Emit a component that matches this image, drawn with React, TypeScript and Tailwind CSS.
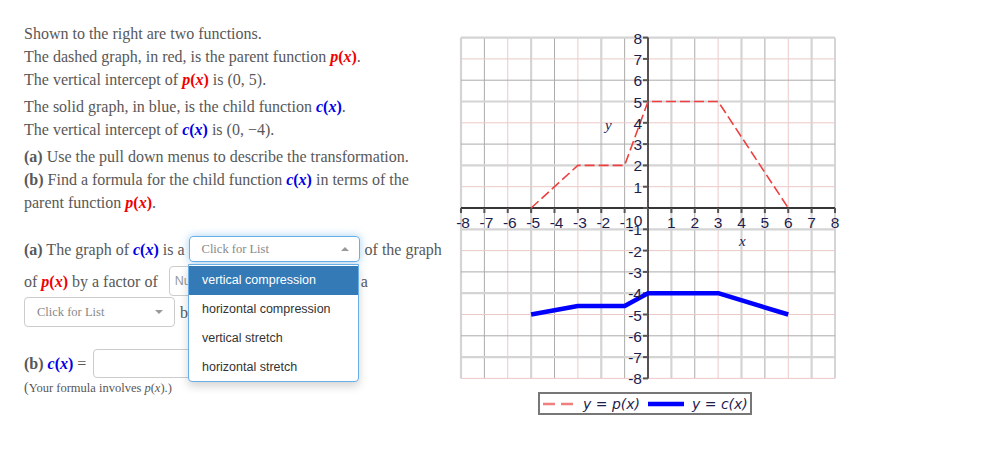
import React from 'react';

const X = (x: number) => 648 + x * 23.375;
const Y = (y: number) => 208 - y * 21.3;
const ticks = Array.from({ length: 17 }, (_, i) => i - 8);

const P = () => (
  <b className="text-[#f00000]">
    <i>p</i>(<i>x</i>)
  </b>
);
const C = () => (
  <b className="text-[#0000e6]">
    <i>c</i>(<i>x</i>)
  </b>
);

const Caret = ({ up }: { up?: boolean }) => (
  <span
    className={`w-0 h-0 border-l-[4px] border-r-[4px] border-l-transparent border-r-transparent ${
      up ? 'border-b-[4px] border-b-[#999]' : 'border-t-[4px] border-t-[#999]'
    }`}
  />
);

// the source grid alternates three line looks
const gridLine = (k: number, vertical: boolean) => {
  if (k === 0) return { stroke: '#d4d4d4', w: 2.2 };
  if (vertical ? k === 1 : k === 2) return { stroke: '#ababab', w: 1 };
  return { stroke: '#ecc9c9', w: 1 };
};

function Graph() {
  const pts = [
    [-5, 0],
    [-3, 2],
    [-1, 2],
    [0, 5],
    [3, 5],
    [6, 0],
  ];
  const red = pts.map(([x, y]) => `${X(x)},${Y(y)}`).join(' ');
  const blue = pts.map(([x, y]) => `${X(x)},${Y(y / 5 - 5)}`).join(' ');
  const font = "'Liberation Sans', sans-serif";
  return (
    <svg width={400} height={420} viewBox="450 0 400 420" className="shrink-0">
      {ticks.map((n, i) => {
        const s = gridLine(i % 3, true);
        return <line key={'v' + n} x1={X(n)} y1={Y(8)} x2={X(n)} y2={Y(-8)} stroke={s.stroke} strokeWidth={s.w} />;
      })}
      {ticks.map((n) => {
        const s = gridLine((8 - n) % 3, false);
        return <line key={'h' + n} x1={X(-8)} y1={Y(n)} x2={X(8)} y2={Y(n)} stroke={s.stroke} strokeWidth={s.w} />;
      })}
      <line x1={X(-8)} y1={Y(0)} x2={X(8)} y2={Y(0)} stroke="#000" strokeWidth={1.3} />
      <line x1={X(0)} y1={Y(8)} x2={X(0)} y2={Y(-8)} stroke="#000" strokeWidth={1.3} />
      {ticks.map((n) => (
        <g key={'t' + n}>
          <line x1={X(n)} y1={Y(0)} x2={X(n)} y2={Y(0) + 5} stroke="#555" strokeWidth={2} />
          <line x1={X(0) - 5} y1={Y(n)} x2={X(0)} y2={Y(n)} stroke="#555" strokeWidth={2} />
        </g>
      ))}
      <polyline points={red} fill="none" stroke="#ee4040" strokeWidth={1.6} strokeDasharray="10 4" />
      <polyline points={blue} fill="none" stroke="#0000ff" strokeWidth={4.5} strokeLinejoin="round" />
      <g fontFamily={font} fontSize={15.5} fill="#1d1d4f">
        {ticks
          .filter((n) => n !== 0)
          .map((n) => (
            <text key={'xl' + n} x={n < 0 ? X(n) + 9 : X(n)} y={Y(0) + 20} textAnchor={n < 0 ? 'end' : 'middle'}>
              {n < 0 ? `-${-n}` : `${n}`}
            </text>
          ))}
        <text x={638} y={Y(0) + 18} textAnchor="middle">
          0
        </text>
        {ticks
          .filter((n) => n !== 0)
          .map((n) => (
            <text key={'yl' + n} x={X(0) - 6} y={Y(n) + 6} textAnchor="end">
              {n < 0 ? `-${-n}` : `${n}`}
            </text>
          ))}
      </g>
      <text x={605} y={130} fontFamily="'Liberation Serif', serif" fontStyle="italic" fontSize={15} fill="#1d1d4f">
        y
      </text>
      <text x={739} y={246} fontFamily="'Liberation Serif', serif" fontStyle="italic" fontSize={15} fill="#1d1d4f">
        x
      </text>
      <rect x={539} y={393} width={212} height={21} fill="#fff" stroke="#777" strokeWidth={2} />
      <line x1={543} y1={404} x2={573} y2={404} stroke="#f08080" strokeWidth={2.5} strokeDasharray="12 6" />
      <text x={583} y={409} fontFamily="'DejaVu Sans', sans-serif" fontStyle="italic" fontSize={14} fill="#1d1d4f">
        y = p(x)
      </text>
      <line x1={648} y1={404} x2={684} y2={404} stroke="#0000ff" strokeWidth={4.5} />
      <text x={692} y={409} fontFamily="'DejaVu Sans', sans-serif" fontStyle="italic" fontSize={14} fill="#1d1d4f">
        y = c(x)
      </text>
    </svg>
  );
}

export default function App() {
  return (
    <div className="relative w-[1002px] h-[456px] bg-white flex font-['Liberation_Serif',serif] text-[#585858]">
      <div className="w-[450px] shrink-0 pl-[24px] pt-[21.5px] text-[16px] leading-[23px] whitespace-nowrap">
        <div>Shown to the right are two functions.</div>
        <div>
          The dashed graph, in red, is the parent function <P />.
        </div>
        <div>
          The vertical intercept of <P /> is (0, 5).
        </div>
        <div className="mt-[4px]">
          The solid graph, in blue, is the child function <C />.
        </div>
        <div>
          The vertical intercept of <C /> is (0, &minus;4).
        </div>
        <div className="mt-[4px]">
          <b>(a)</b> Use the pull down menus to describe the transformation.
        </div>
        <div>
          <b>(b)</b> Find a formula for the child function <C /> in terms of the
        </div>
        <div>
          parent function <P />.
        </div>

        <div className="mt-[22.5px] flex items-center h-[26px]">
          <span>
            <b>(a)</b> The graph of <C /> is a
          </span>
          <div className="ml-[4px] w-[171px] h-[26px] border border-[#66afe9] rounded-[4px] shadow-[0_0_8px_rgba(102,175,233,0.6)] flex items-center justify-between pl-[12px] pr-[10px] text-[12.5px] text-[#888]">
            <span>Click for List</span>
            <Caret up />
          </div>
          <span className="ml-[5px]">of the graph</span>
        </div>

        <div className="mt-[4px] flex items-center h-[30px]">
          <span>
            of <P /> by a factor of
          </span>
          <div className="ml-[11px] w-[160px] h-[30px] border border-[#ccc] rounded-[4px] flex items-center pl-[5px] font-['Liberation_Sans',sans-serif] text-[12.5px] text-[#999]">
            Number
          </div>
          <span className="ml-[5px]">and a</span>
        </div>

        <div className="mt-[1px] flex items-center h-[30px]">
          <div className="w-[151px] h-[30px] border border-[#ccc] rounded-[4px] flex items-center justify-between pl-[12px] pr-[11px] text-[12.5px] text-[#888]">
            <span>Click for List</span>
            <Caret />
          </div>
          <span className="ml-[5px]">by a factor of</span>
        </div>

        <div className="mt-[22px] flex items-center h-[29px]">
          <span>
            <b>(b)</b> <C /> =
          </span>
          <div className="ml-[7px] w-[230px] h-[29px] border border-[#ccc] rounded-[4px]" />
        </div>

        <div className="mt-[2px] text-[12.5px] leading-[16px]">
          <span className="text-[14px]">(</span>Your formula involves <i>p</i>(<i>x</i>).)
        </div>
      </div>

      <Graph />

      <div className="absolute left-[188px] top-[264px] w-[171px] h-[118px] bg-white border border-[#66afe9] rounded-b-[4px] shadow-[0_4px_10px_rgba(0,0,0,0.18)] font-['Liberation_Sans',sans-serif] text-[12.5px] text-[#333] py-[1px]">
        <div className="h-[29px] flex items-center pl-[13px] bg-[#337ab7] text-white">vertical compression</div>
        <div className="h-[29px] flex items-center pl-[13px]">horizontal compression</div>
        <div className="h-[29px] flex items-center pl-[13px]">vertical stretch</div>
        <div className="h-[29px] flex items-center pl-[13px]">horizontal stretch</div>
      </div>
    </div>
  );
}
